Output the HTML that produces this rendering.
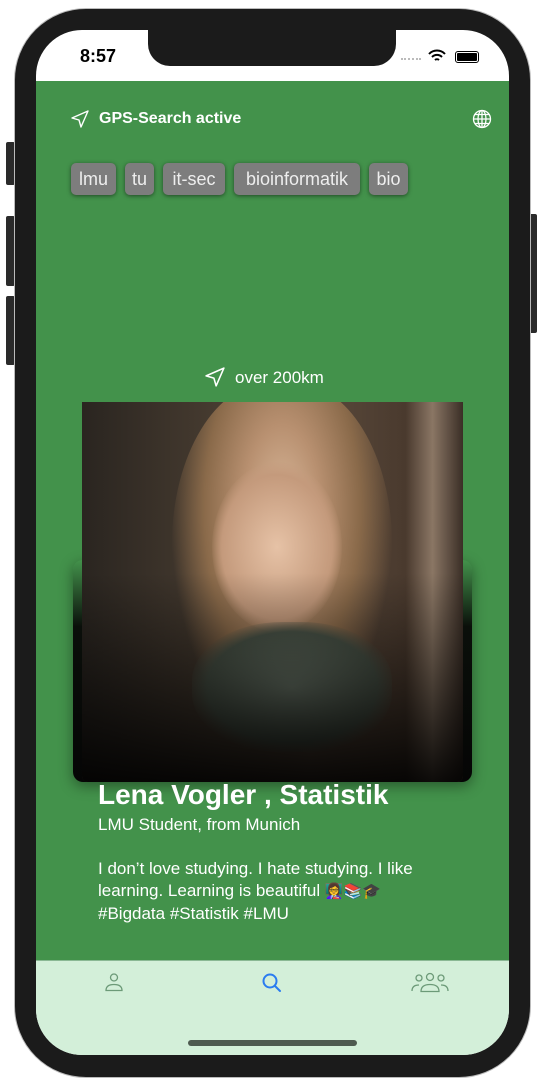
<!DOCTYPE html>
<html><head><meta charset="utf-8"><style>
*{margin:0;padding:0;box-sizing:border-box}
body{width:544px;height:1084px;background:#fff;position:relative;overflow:hidden;font-family:"Liberation Sans",sans-serif}
.btn{position:absolute;background:#2a2a2a;border-radius:2px}
.phone{position:absolute;left:14px;top:8px;width:517px;height:1070px;background:#1b1b1b;border-radius:72px;border:1px solid #bbb}
.screen{position:absolute;left:36px;top:30px;width:473px;height:1025px;border-radius:46px;overflow:hidden;background:#fff}
.notch{position:absolute;left:148px;top:30px;width:248px;height:36px;background:#1b1b1b;border-radius:0 0 22px 22px}
.green{position:absolute;left:0;top:51px;width:473px;height:879px;background:#43924b}
.tab{position:absolute;left:0;top:930px;width:473px;height:95px;background:#d3efd9;border-top:1px solid #8ab894}
.tag{position:absolute;top:163px;height:32px;background:#7d7d7d;border-radius:5px;color:#eee;font-size:18px;line-height:32px;text-align:center;box-shadow:0 1px 4px rgba(0,0,0,.5)}
.w{color:#fff;position:absolute}
</style></head><body>
<div class="btn" style="left:6px;top:142px;width:9px;height:43px"></div>
<div class="btn" style="left:6px;top:216px;width:9px;height:70px"></div>
<div class="btn" style="left:6px;top:296px;width:9px;height:69px"></div>
<div class="btn" style="left:529px;top:214px;width:8px;height:119px"></div>
<div class="phone"></div>
<div class="screen">
 <div class="green"></div>
 <div class="tab"></div>
 <div style="position:absolute;left:152px;top:1010px;width:169px;height:6px;border-radius:3px;background:#4e5a50"></div>
</div>
<div class="notch"></div>
<div style="position:absolute;left:80px;top:46px;font-size:18px;font-weight:bold;color:#000">8:57</div>
<div style="position:absolute;left:401px;top:58px;width:20px;height:3px;border-top:2px dotted #bbb"></div>
<svg style="position:absolute;left:428px;top:49px" width="18" height="14" viewBox="0 0 18 14"><path d="M1 5a11 11 0 0 1 16 0M4 8a7 7 0 0 1 10 0M7 11a3 3 0 0 1 4 0" stroke="#000" stroke-width="2" fill="none"/></svg>
<div style="position:absolute;left:455px;top:51px;width:24px;height:12px;border:1.5px solid #000;border-radius:3px;padding:1px"><div style="width:100%;height:100%;background:#000;border-radius:1px"></div></div>
<svg style="position:absolute;left:71px;top:110px" width="18" height="18" viewBox="0 0 18 18"><path d="M17 1L1 8l7 2 2 7z" stroke="#fff" stroke-width="1.4" fill="none" stroke-linejoin="round"/></svg>
<div class="w" style="left:99px;top:110px;font-size:16px;font-weight:bold">GPS-Search active</div>
<svg style="position:absolute;left:472px;top:109px" width="20" height="20" viewBox="0 0 20 20" fill="none" stroke="#fff" stroke-width="1.3"><circle cx="10" cy="10" r="8.5"/><ellipse cx="10" cy="10" rx="4" ry="8.5"/><path d="M10 1.5v17M1.5 10h17M3 5.5h14M3 14.5h14"/></svg>
<div class="tag" style="left:71px;width:45px">lmu</div>
<div class="tag" style="left:125px;width:29px">tu</div>
<div class="tag" style="left:163px;width:62px">it-sec</div>
<div class="tag" style="left:234px;width:126px">bioinformatik</div>
<div class="tag" style="left:369px;width:39px">bio</div>
<svg style="position:absolute;left:205px;top:367px" width="20" height="20" viewBox="0 0 18 18"><path d="M17 1L1 8l7 2 2 7z" stroke="#fff" stroke-width="1.4" fill="none" stroke-linejoin="round"/></svg>
<div class="w" style="left:235px;top:368px;font-size:17px">over 200km</div>
<div style="position:absolute;left:73px;top:560px;width:399px;height:222px;border-radius:10px;background:linear-gradient(#43924b,#0a0f0a 30%,#050505);box-shadow:0 4px 14px rgba(0,0,0,.4)"></div>
<div style="position:absolute;left:82px;top:402px;width:381px;height:380px;overflow:hidden;border-radius:0 0 6px 6px;background:linear-gradient(90deg,#2a2520 0%,#4a3e32 40%,#5a4a3c 60%,#4a3a2e 85%,#8a7664 92%,#3a2e26 100%)">
 <div style="position:absolute;left:90px;top:-20px;width:220px;height:360px;border-radius:45%;background:radial-gradient(ellipse at 50% 35%,#d9b89a 0%,#b89070 25%,#8a6a4a 50%,transparent 72%)"></div>
 <div style="position:absolute;left:130px;top:60px;width:130px;height:170px;border-radius:50%;background:radial-gradient(#e6c2a6,#c49a7c 60%,transparent 72%)"></div>
 <div style="position:absolute;left:110px;top:220px;width:200px;height:130px;border-radius:45%;background:radial-gradient(#6e7a6c,#4a5448 60%,transparent 75%)"></div>
 <div style="position:absolute;left:0;top:0;width:100%;height:100%;background:linear-gradient(transparent 45%,rgba(0,0,0,.9) 100%)"></div>
</div>
<div class="w" style="left:98px;top:779px;font-size:28px;font-weight:bold">Lena Vogler , Statistik</div>
<div class="w" style="left:98px;top:815px;font-size:17px">LMU Student, from Munich</div>
<div class="w" style="left:98px;top:858px;width:370px;font-size:17px;line-height:22px">I don’t love studying. I hate studying. I like learning. Learning is beautiful <span style="font-size:15px">👩‍🏫📚🎓</span><br>#Bigdata #Statistik #LMU</div>
<svg style="position:absolute;left:104px;top:972px" width="20" height="20" viewBox="0 0 20 20" fill="none" stroke="#6c9a78" stroke-width="1.3"><circle cx="10" cy="5.5" r="3.5"/><path d="M2 18.5q0-6 8-6t8 6z"/></svg>
<svg style="position:absolute;left:261px;top:972px" width="22" height="22" viewBox="0 0 22 22" fill="none" stroke="#2a7cf0" stroke-width="2"><circle cx="9" cy="9" r="6.5"/><path d="M14 14l5 5" stroke-linecap="round"/></svg>
<svg style="position:absolute;left:411px;top:972px" width="38" height="22" viewBox="0 0 38 22" fill="none" stroke="#6c9a78" stroke-width="1.3"><circle cx="8" cy="6" r="3"/><circle cx="19" cy="5" r="3.5"/><circle cx="30" cy="6" r="3"/><path d="M1 19q0-6 7-6M37 19q0-6-7-6M10 19.5q0-7 9-7t9 7z"/></svg>
</body></html>
